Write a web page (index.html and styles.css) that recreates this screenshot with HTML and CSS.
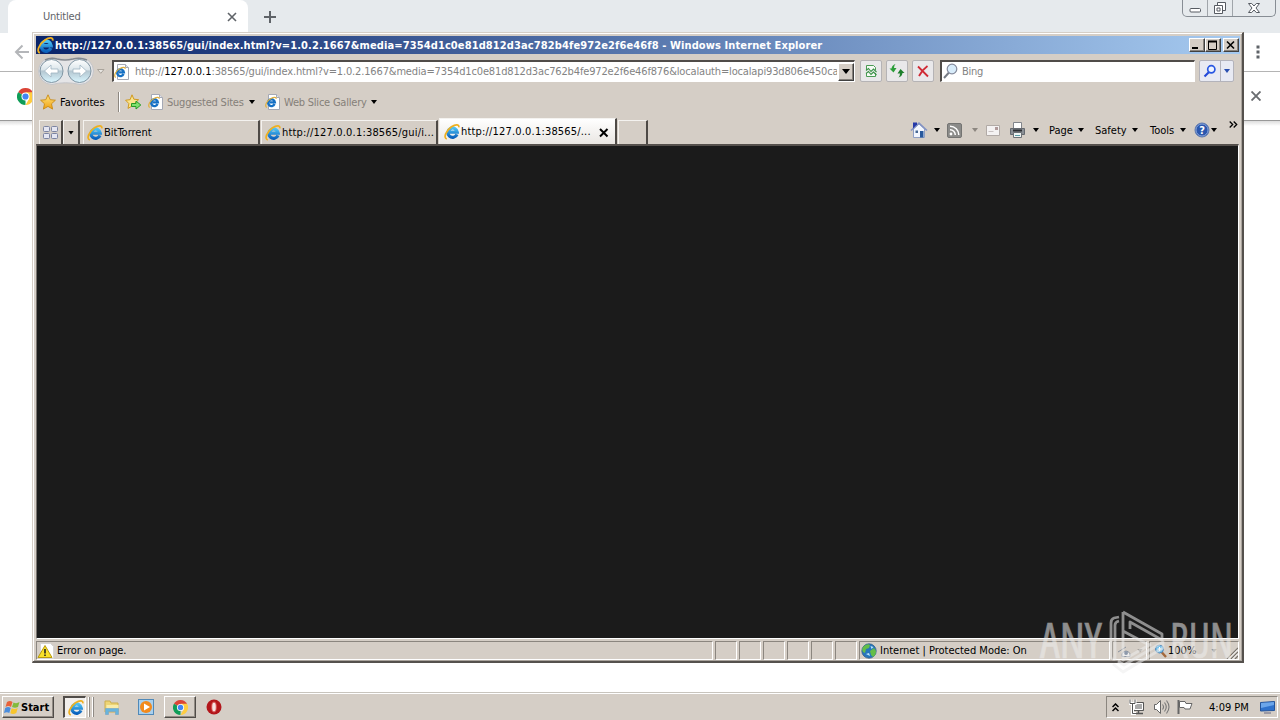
FILE: index.html
```html
<!DOCTYPE html>
<html lang="en">
<head>
    <meta charset="UTF-8">
    <title>Desktop</title>
    <link rel="stylesheet" href="styles.css">
</head>
<body>

    <!-- Shared icons -->
    <svg class="defs" width="0" height="0">
        <defs>
            <linearGradient id="blue" x1="0" y1="0" x2="0" y2="1">
                <stop offset="0" stop-color="#4cc2f4"/>
                <stop offset="1" stop-color="#0b62bd"/>
            </linearGradient>
            <linearGradient id="gold" x1="0" y1="0" x2="0" y2="1">
                <stop offset="0" stop-color="#ffe680"/>
                <stop offset="1" stop-color="#f0a010"/>
            </linearGradient>
            <linearGradient id="orb" x1="0" y1="0" x2="0" y2="1">
                <stop offset="0" stop-color="#ffffff"/>
                <stop offset="0.45" stop-color="#dbe5ea"/>
                <stop offset="0.5" stop-color="#b4c6d0"/>
                <stop offset="1" stop-color="#d9f6ff"/>
            </linearGradient>
        </defs>
        <symbol id="ie" viewBox="0 0 16 16">
            <path d="M13 10.400A4.700 4.700 0 1 1 13.300 8.200H5.200" fill="none" stroke="url(#blue)" stroke-width="3.200"/>
            <path d="M2.800 15C-1 14 2 6.500 7.500 2.800c4-2.600 7.800-2.700 7.300.6" fill="none" stroke="#efb020" stroke-width="1.700"/>
        </symbol>
        <symbol id="iepage" viewBox="0 0 16 16">
            <path d="M3.500.5h8l3 3v12h-11z" fill="#fff" stroke="#a5a9b5"/>
            <path d="M11.500.5v3h3" fill="#e4e4ea" stroke="#a5a9b5"/>
            <path d="M9.600 10.100A3.400 3.400 0 1 1 9.900 8.300H4.500" fill="none" stroke="#1670c4" stroke-width="2.300"/>
            <path d="M1.700 13.500C-.8 11.500 2 6.500 6 4.500c2.700-1.500 5.500-1.600 5.100.4" fill="none" stroke="#e0b040" stroke-width="1.200"/>
        </symbol>
        <symbol id="star" viewBox="0 0 16 16">
            <path d="M8 .8l2.200 4.900 5.200.5-3.900 3.600 1.100 5.300L8 12.400l-4.600 2.700 1.100-5.300L.6 6.200l5.200-.5z" fill="url(#gold)" stroke="#c98a14" stroke-width=".9"/>
        </symbol>
        <symbol id="chrome" viewBox="0 0 16 16">
            <path d="M8 8L1.070 4A8 8 0 0 1 14.930 4z" fill="#db4437"/>
            <path d="M8 8L8 16A8 8 0 0 1 1.070 4z" fill="#0f9d58"/>
            <path d="M8 4h6.930A8 8 0 0 1 8 16l3.400-6z" fill="#ffcd40"/>
            <circle cx="8" cy="8" r="3.800" fill="#fff"/>
            <circle cx="8" cy="8" r="2.900" fill="#4285f4"/>
        </symbol>
    </svg>

    <!-- Background browser -->
    <div class="browser">
        <div class="tabstrip">
            <div class="ctab">
                <span class="ctab-title">Untitled</span>
                <svg width="10" height="10" viewBox="0 0 10 10"><path d="M1 1l8 8M9 1l-8 8" stroke="#5f6368" stroke-width="1.600"/></svg>
            </div>
            <svg class="plus" width="12" height="12" viewBox="0 0 12 12"><path d="M6 0v12M0 6h12" stroke="#5f6368" stroke-width="2"/></svg>
            <div class="winbtns">
                <span class="wb"><svg width="14" height="16" viewBox="0 0 14 16"><rect x="2" y="8.500" width="10.500" height="3.500" rx="1" fill="#fff" stroke="#565b62"/></svg></span>
                <span class="wb"><svg width="14" height="16" viewBox="0 0 14 16"><path d="M4.500 2.500h8v8h-8z" fill="#fff" stroke="#565b62"/><path d="M1.500 5.500h8v8h-8z" fill="#fff" stroke="#565b62"/><path d="M4 8h3v3h-3z" fill="#fff" stroke="#565b62"/></svg></span>
                <span class="wb wide"><svg width="14" height="16" viewBox="0 0 14 16"><path d="M1.500 3.500h3.200L7 6l2.300-2.500h3.200L9 8l3.500 4.500H9.300L7 10l-2.300 2.500H1.500L5 8z" fill="#fff" stroke="#565b62"/></svg></span>
            </div>
        </div>
        <div class="ctoolbar">
            <svg width="16" height="16" viewBox="0 0 16 16"><path d="M15 8H2M8.500 1.500L2 8l6.500 6.500" fill="none" stroke="#b4b6b9" stroke-width="2"/></svg>
            <svg width="4" height="16" viewBox="0 0 4 16"><path d="M.5 1.500h3v3h-3zM.5 6.500h3v3h-3zM.5 11.500h3v3h-3z" fill="#5f6368"/></svg>
        </div>
        <div class="infobar">
            <svg width="17" height="17"><use href="#chrome"/></svg>
            <svg width="10" height="10" viewBox="0 0 10 10"><path d="M.5.5l9 9M9.500.5l-9 9" stroke="#6a6d71" stroke-width="1.900"/></svg>
        </div>
        <div class="cpage"></div>
    </div>

    <!-- Internet Explorer window -->
    <div class="window">
        <div class="titlebar">
            <svg width="17" height="17"><use href="#ie"/></svg>
            <span class="title">http://127.0.0.1:38565/gui/index.html?v=1.0.2.1667&amp;media=7354d1c0e81d812d3ac782b4fe972e2f6e46f8 - Windows Internet Explorer</span>
            <span class="tb"><svg width="12" height="10"><path d="M1 8h6" stroke="#000" stroke-width="2"/></svg></span>
            <span class="tb"><svg width="12" height="10"><path d="M1.500 1v8.500h8V1" fill="none" stroke="#000"/><path d="M1 1.500h9" stroke="#000" stroke-width="2"/></svg></span>
            <span class="tb last"><svg width="12" height="10"><path d="M2 1.500l7 7M9 1.500l-7 7" stroke="#000" stroke-width="1.600"/></svg></span>
        </div>

        <div class="navbar">
            <svg class="orbs" width="68" height="28" viewBox="0 0 68 28">
                <path d="M14 .5Q27 4 42 .5A13.500 13.500 0 0 1 42 27.500Q27 24 14 27.500A13.500 13.500 0 0 1 14 .5z" fill="#e5e5e7" stroke="#c4c5c9"/>
                <path d="M7 3Q13 0 19 2Q27 4 35 2Q42 0 49 3" fill="none" stroke="#85898f" stroke-width="1.500"/>
                <circle cx="13.500" cy="14" r="11.500" fill="url(#orb)" stroke="#8095a3"/>
                <circle cx="41.500" cy="14" r="11.500" fill="url(#orb)" stroke="#8095a3"/>
                <path d="M6.500 14l6.500-6v4h7v4h-7v4z" fill="#fff" stroke="#a0b4c2" stroke-width=".8"/>
                <path d="M48.500 14l-6.500-6v4h-7v4h7v4z" fill="#fff" stroke="#a0b4c2" stroke-width=".8"/>
                <path d="M59.500 12.500h6.500l-3.200 3.800z" fill="#e8e6e2" stroke="#aaa49c"/>
            </svg>
            <div class="address">
                <svg width="16" height="16"><use href="#iepage"/></svg>
                <span class="url">http://<b>127.0.0.1</b>:38565/gui/index.html?v=1.0.2.1667&amp;media=7354d1c0e81d812d3ac762b4fe972e2f6e46f876&amp;localauth=localapi93d806e450cac</span>
                <span class="drop"><i class="caret big"></i></span>
            </div>
            <span class="nb"><svg width="14" height="14" viewBox="0 0 14 14"><path d="M2.500 6V1.500h7l2 2V6M2.500 9v3.500h9V9" fill="#f4faf4" stroke="#4b9b55"/><path d="M2 6.500l2.500-2 2.500 3 2.500-2.500 3 3M2 9.500l2.500-2 2.500 3 2.500-2.500 3 3" fill="none" stroke="#3b9348" stroke-width="1.100"/></svg></span>
            <span class="nb"><svg width="16" height="14" viewBox="0 0 16 14"><path d="M6.500 0Q5 1.500 5 4h2.500L4.500 8.500.5 4.500h2Q3 1 6.500 0z" fill="#2c9e3a"/><path d="M9.500 13.500q1.500-1.500 1.500-4H8.500L11.500 5l4 4h-2q-.5 3.500-4 4.500z" fill="#1d7f2c"/></svg></span>
            <span class="nb"><svg width="14" height="14" viewBox="0 0 14 14"><path d="M2 2.500q4 4 10 10M11.500 2Q6 6 3 12" fill="none" stroke="#d02a35" stroke-width="1.800"/></svg></span>
            <div class="search">
                <svg width="17" height="17" viewBox="0 0 17 17"><path d="M7 9.500L2 15" stroke="#777c86" stroke-width="2"/><circle cx="10" cy="6" r="4.800" fill="#d8ecfa" stroke="#858a9c" stroke-width="1.200"/></svg>
                <span class="bing">Bing</span>
            </div>
            <div class="go">
                <span><svg width="14" height="14" viewBox="0 0 14 14"><path d="M6 8l-4.500 4.500" stroke="#2448d8" stroke-width="2.200"/><circle cx="8.300" cy="5.300" r="3.600" fill="#eef4ff" stroke="#2857e2" stroke-width="1.700"/></svg></span>
                <span class="go-drop"><i class="caret"></i></span>
            </div>
        </div>

        <div class="favbar">
            <svg width="16" height="16"><use href="#star"/></svg>
            <span class="fav-label">Favorites</span>
            <i class="sep"></i>
            <svg class="addfav" width="17" height="16" viewBox="0 0 17 16"><path d="M7 .8l1.900 4.400 4.700.5-3.500 3.200L7 12l-4 2.400.9-4.800L.6 6.200l4.500-.5z" fill="#fbe48c" stroke="#d09a20"/><path d="M6.500 9.500h4.500V7l4.800 4-4.800 4v-2.500H6.500z" fill="#7fe070" stroke="#279a27"/></svg>
            <svg class="sugicon" width="16" height="16"><use href="#iepage"/></svg>
            <span class="sug">Suggested Sites</span>
            <i class="caret"></i>
            <svg class="webicon" width="16" height="16"><use href="#iepage"/></svg>
            <span class="web">Web Slice Gallery</span>
            <i class="caret"></i>
        </div>

        <div class="tabrow">
            <div class="quick"><svg width="17" height="14" viewBox="0 0 17 14"><g fill="#e5e6f2" stroke="#7d84a2"><rect x="1.500" y=".5" width="6" height="5" rx="1"/><rect x="9.500" y=".5" width="6" height="5" rx="1"/><rect x="1.500" y="7.500" width="6" height="5" rx="1"/><rect x="9.500" y="7.500" width="6" height="5" rx="1"/></g></svg></div>
            <div class="quickdrop"><i class="caret"></i></div>
            <div class="tab"><svg width="16" height="16"><use href="#ie"/></svg><span>BitTorrent</span></div>
            <div class="tab"><svg width="16" height="16"><use href="#ie"/></svg><span class="wider">http://127.0.0.1:38565/gui/i...</span></div>
            <div class="tab active"><svg width="16" height="16"><use href="#ie"/></svg><span class="wider">http://127.0.0.1:38565/...</span>
                <svg class="close" width="10" height="10" viewBox="0 0 10 10"><path d="M1 1l7.500 7.500M8.500 1L1 8.500" stroke="#000" stroke-width="2"/></svg>
            </div>
            <div class="tab new"></div>
            <div class="commands">
                <svg class="home" width="18" height="18" viewBox="0 0 18 18"><path d="M3.500 8v8.500h11V8L9 3z" fill="#f2f6fe" stroke="#8f9fc4"/><path d="M1 9.500L9 2l8 7.500" fill="none" stroke="#8292c4" stroke-width="1.500"/><path d="M3 1.500h4v2l-4 4z" fill="#2438a8"/><path d="M10 10h3.500v6.500H10z" fill="#28589c"/><path d="M5.500 9.500h2.500v2.500H5.500z" fill="#476894"/></svg>
                <i class="caret"></i>
                <svg class="rss" width="15" height="15" viewBox="0 0 15 15"><rect x=".5" y=".5" width="14" height="14" rx="1.500" fill="#8b8b89" stroke="#747472"/><circle cx="4" cy="11" r="1.400" fill="#fff"/><path d="M3 6.700a5.300 5.300 0 0 1 5.300 5.300M3 3.200A8.800 8.800 0 0 1 11.800 12" fill="none" stroke="#fff" stroke-width="1.500"/></svg>
                <i class="caret dim"></i>
                <svg class="mail" width="14" height="11" viewBox="0 0 14 11"><path d="M.5.5h13v10H.5z" fill="#f4f2f2" stroke="#b1aaa6"/><path d="M9 2h3v3H9z" fill="#b09a9a"/><path d="M2.500 6.500h5" stroke="#c8c2c2"/></svg>
                <svg class="print" width="17" height="17" viewBox="0 0 17 17"><path d="M4.500.5h8v6h-8z" fill="#fff" stroke="#81858b"/><path d="M1.500 6.500h14v6h-14z" fill="#8b9096" stroke="#666a70"/><path d="M4 8.500h9" stroke="#2b2e32" stroke-width="2"/><path d="M4.500 10.500h8v5h-8z" fill="#eef4f4" stroke="#6d7176"/><path d="M6 13.500h5" stroke="#5d9da6"/></svg>
                <i class="caret"></i>
                <span class="cmd page">Page</span><i class="caret"></i>
                <span class="cmd safety">Safety</span><i class="caret"></i>
                <span class="cmd tools">Tools</span><i class="caret"></i>
                <svg class="help" width="16" height="16" viewBox="0 0 16 16"><circle cx="8" cy="8" r="7" fill="#2b57ae" stroke="#5f79ad"/><circle cx="8" cy="8" r="6" fill="none" stroke="#9bb5e4" stroke-width=".8"/><text x="8" y="12" class="q">?</text></svg>
                <i class="caret"></i>
                <svg class="more" width="9" height="7" viewBox="0 0 9 7"><path d="M.7.5l3 3-3 3M4.700.5l3 3-3 3" fill="none" stroke="#000" stroke-width="1.300"/></svg>
            </div>
        </div>

        <div class="content"></div>

        <div class="status">
            <div class="pane message">
                <svg width="17" height="16" viewBox="0 0 17 16"><path d="M3.500.5h10l3 3v12h-13z" fill="#fff" stroke="#d5d5d5"/><path d="M8 2.500L15 14.500H1z" fill="#f8e028" stroke="#b89a10"/><path d="M8 6v4.500M8 11.500v1.500" stroke="#222" stroke-width="1.600"/></svg>
                <span class="err">Error on page.</span>
            </div>
            <div class="pane small"></div>
            <div class="pane small"></div>
            <div class="pane small"></div>
            <div class="pane small"></div>
            <div class="pane small"></div>
            <div class="pane small"></div>
            <div class="pane zone">
                <svg width="16" height="16" viewBox="0 0 16 16"><circle cx="8" cy="8" r="7.200" fill="#2676bd" stroke="#335f88" stroke-width=".8"/><path d="M3 3q4-3 6-1l-1 3-3 1-1 4-2-1q-2-3 1-6M9 8l4-3 2 3q0 4-3 6l-2-2z" fill="#64be48"/><path d="M9.500 3l3 1-2 2zM5 11l3-1 1 3z" fill="#bfe8f8"/></svg>
                <span class="zonetext">Internet | Protected Mode: On</span>
            </div>
            <div class="pane filter">
                <svg width="15" height="14" viewBox="0 0 15 14"><path d="M1 8l8-5M5 9.500q4-5 8 0v3H5z" fill="#eee" stroke="#8a929e"/><circle cx="9" cy="9" r="2" fill="#8d99ab"/></svg>
                <i class="caret dim"></i>
            </div>
            <div class="pane zoom">
                <svg width="14" height="14" viewBox="0 0 14 14"><path d="M7.500 8l4.500 5" stroke="#a2683c" stroke-width="2.400"/><circle cx="5.500" cy="5" r="4" fill="#78c3ec" stroke="#4f83b4"/><path d="M3.500 5h4M5.500 3v4" stroke="#fff"/></svg>
                <span class="pct">100%</span>
                <i class="caret dim"></i>
                <svg class="grip" width="12" height="12" viewBox="0 0 12 12"><path d="M1 12L12 1M5 12l7-7M9 12l3-3" stroke="#77716a" stroke-width="1.200"/><path d="M2.500 12L12 2.500M6.500 12L12 6.500" stroke="#fff"/></svg>
            </div>
        </div>
    </div>

    <!-- Watermark -->
    <svg class="watermark" width="200" height="68" viewBox="0 0 200 68">
        <text x="2" y="51" textLength="62" lengthAdjust="spacingAndGlyphs">ANY</text>
        <text x="132" y="51" textLength="63" lengthAdjust="spacingAndGlyphs">RUN</text>
        <path d="M81 10l-5 1q-3 1-3 5v33q0 4 4 3V18q0-3 4-4M85 5l39 22v6L92 15v7M85 5v19l26 14M85 24v29l28-16M75 57l10 8 40-24v-6L86 58l-6-4" fill="none" stroke="#ededed" stroke-width="2.800" stroke-linejoin="round"/>
    </svg>

    <!-- Taskbar -->
    <div class="taskbar">
        <div class="start">
            <svg width="17" height="16" viewBox="0 0 17 16"><path d="M3 3q3-2 5.500 0L7 8Q4.500 6 1.500 8z" fill="#e8623a"/><path d="M9.500 3.500q3 1.500 6-.5L14 8q-3 1.500-6 0z" fill="#83ba3c"/><path d="M1.200 9q3-2 5.500 0l-1.400 5Q3 12.500 0 14z" fill="#4b8ddd"/><path d="M7.700 9.300q3 1.500 6-.3l-1.400 5q-3 1.800-6 .3z" fill="#f8c52c"/></svg>
            <span class="starttext">Start</span>
        </div>
        <div class="task pressed"><div class="pressed-face"><svg width="16" height="16"><use href="#ie"/></svg></div><i></i><i></i></div>
        <svg class="explorer" width="16" height="16" viewBox="0 0 16 16"><path d="M1 2h5l1 2h7v9H1z" fill="#edd576" stroke="#cdae4c"/><path d="M2.500 6h12v4h-12z" fill="#f9eca8"/><path d="M1.500 15.500V9.500h13v6h-3v-3h-7v3z" fill="#66b4de" stroke="#78a7c4" stroke-width=".7"/></svg>
        <svg class="player" width="16" height="16" viewBox="0 0 16 16"><rect x=".5" y=".5" width="15" height="15" fill="#a9d0ed" stroke="#5089b8"/><circle cx="8" cy="8" r="6" fill="#f28a1c"/><path d="M6 4.500v7L12 8z" fill="#fff"/></svg>
        <div class="task raised"><svg width="15" height="15"><use href="#chrome"/></svg></div>
        <svg class="opera" width="16" height="16" viewBox="0 0 16 16"><circle cx="8" cy="8" r="7.500" fill="#b3161b"/><ellipse cx="8" cy="8" rx="2.300" ry="5" fill="#f6e3e3" stroke="#d84c4c"/></svg>
        <div class="tray">
            <svg class="up" width="7" height="9" viewBox="0 0 7 9"><path d="M.5 4l3-3 3 3M.5 8l3-3 3 3" fill="none" stroke="#000" stroke-width="1.500"/></svg>
            <svg class="net" width="16" height="16" viewBox="0 0 16 16"><path d="M4.500 3.500h10v8h-10z" fill="#aaa" stroke="#555"/><path d="M5.500 4.500h8v6h-8z" fill="none" stroke="#fff"/><path d="M6 14.500h8M9.500 11.500v3" stroke="#555" stroke-width="1.500"/><path d="M1 .5v4h5v-4M3.500 4.500v10H7" fill="none" stroke="#fff" stroke-width="3"/><path d="M1 .5v4h5v-4M3.500 4.500v10H7" fill="none" stroke="#555"/></svg>
            <svg class="vol" width="17" height="16" viewBox="0 0 17 16"><path d="M1.500 5.500h2l4-4v13l-4-4h-2z" fill="#fff" stroke="#666"/><path d="M9.500 5.500q2 2.500 0 5M11.500 3.500q3.500 4.500 0 9M13.500 1.500q5 6.500 0 13" fill="none" stroke="#777" stroke-width="1.100"/></svg>
            <svg class="flag" width="16" height="16" viewBox="0 0 16 16"><path d="M1.500 1v14" stroke="#666" stroke-width="2"/><path d="M2.500 2.500H8l1 2h6l-2 5.500H8L7 8.500H2.500z" fill="#fff" stroke="#666"/></svg>
            <span class="clock">4:09 PM</span>
            <svg class="desk" width="16" height="14" viewBox="0 0 16 14"><path d="M.5 2.500l14-1v9l-14 .5z" fill="#2f72cc" stroke="#24549a"/><path d="M1 3l13-1v3L1 8z" fill="#6ca6ea"/><path d="M4 13h7" stroke="#889" stroke-width="1.500"/></svg>
        </div>
    </div>

</body>
</html>
```

FILE: styles.css
```css
* {
    box-sizing: border-box;
}
body {
    margin: 0;
    width: 1280px;
    height: 720px;
    overflow: hidden;
    display: flex;
    flex-direction: column;
    background: #fff;
    color: #000;
    font-family: "DejaVu Sans Condensed", "DejaVu Sans", sans-serif;
    font-stretch: condensed;
    font-size: 11px;
    white-space: nowrap;
}
svg {
    flex: none;
    display: block;
}
.defs {
    position: absolute;
}
.caret {
    flex: none;
    width: 6px;
    height: 4px;
    background: #000;
    clip-path: polygon(0 0, 100% 0, 50% 100%);
}
.caret.big {
    width: 8px;
    height: 5px;
}
.caret.dim {
    background: #8c8780;
}

/* Background browser */
.browser {
    flex: 1;
    display: flex;
    flex-direction: column;
}
.tabstrip {
    height: 33px;
    display: flex;
    align-items: flex-start;
    padding-left: 8px;
    background: #e6eaed;
}
.ctab {
    width: 240px;
    height: 33px;
    display: flex;
    align-items: center;
    justify-content: space-between;
    padding: 0 11px 0 35px;
    background: #fff;
    border-radius: 8px 8px 0 0;
    color: #5f6368;
}
.ctab-title {
    letter-spacing: -0.2px;
}
.plus {
    margin: 11px 0 0 16px;
}
.winbtns {
    display: flex;
    height: 17px;
    margin: 0 4px 0 auto;
    border: 1px solid #878d94;
    border-top: 0;
    border-radius: 0 0 5px 5px;
}
.wb {
    width: 25px;
    display: flex;
    justify-content: center;
    border-right: 1px solid #a0a5aa;
}
.wb.wide {
    width: 42px;
    border-right: 0;
}
.ctoolbar {
    height: 39px;
    display: flex;
    align-items: center;
    justify-content: space-between;
    padding: 0 20px 0 14px;
    border-bottom: 1px solid #b4b4b4;
}
.infobar {
    height: 49px;
    display: flex;
    align-items: center;
    justify-content: space-between;
    padding: 0 19px 0 17px;
    border-bottom: 1px solid #999;
}
.cpage {
    flex: 1;
    background: linear-gradient(#ddd, #fff 5px);
}

/* Internet Explorer window */
.window {
    position: absolute;
    left: 32px;
    top: 32px;
    width: 1212px;
    height: 631px;
    display: flex;
    flex-direction: column;
    padding: 2px 2px 1px 2px;
    background: #d5cec6;
    border: 1px solid #d5cec6;
    border-right: 2px solid #55514d;
    border-bottom: 2px solid #55514d;
    box-shadow: inset 1px 1px #fff, inset -1px -1px #aaa49d;
}
.titlebar {
    height: 18px;
    margin: 1px 0 0 1px;
    display: flex;
    align-items: center;
    padding: 0 1px;
    background: linear-gradient(90deg, #0a246a, #a6caf0);
    color: #fff;
    font-weight: bold;
}
.title {
    flex: 1;
    margin-left: 1px;
    letter-spacing: 0.11px;
}
.tb, .drop {
    display: flex;
    align-items: center;
    justify-content: center;
    background: #d5cec6;
    border: 1px solid;
    border-color: #fff #404040 #404040 #fff;
    box-shadow: inset -1px -1px #87827c;
}
.tb {
    width: 16px;
    height: 14px;
}
.tb.last {
    margin-left: 2px;
}
.navbar {
    height: 34px;
    display: flex;
    align-items: center;
    padding-left: 3px;
}
.orbs {
    margin-right: 6px;
}
.address, .search {
    height: 22px;
    display: flex;
    align-items: center;
    background: #fff;
    border: 1px solid #fff;
    border-top: 2px solid #504c49;
    border-left: 2px solid #504c49;
    color: #838383;
}
.address {
    width: 743px;
    margin-right: 5px;
}
.url {
    width: 702px;
    margin-left: 5px;
    overflow: hidden;
    letter-spacing: -0.15px;
}
.url b {
    font-weight: normal;
    color: #000;
    letter-spacing: 0;
}
.drop {
    width: 16px;
    height: 18px;
    margin-left: auto;
}
.nb {
    width: 22px;
    height: 22px;
    margin-right: 4px;
    display: flex;
    align-items: center;
    justify-content: center;
    background: #e9e8ea;
    border: 1px solid #b5b3b5;
    border-radius: 2px;
}
.search {
    width: 255px;
    margin-left: 2px;
}
.bing {
    margin-left: 3px;
    letter-spacing: -0.3px;
}
.go {
    height: 22px;
    margin-left: 4px;
    display: flex;
    background: #e8eaf3;
    border: 1px solid #b3b3bb;
    border-radius: 2px;
}
.go span {
    width: 20px;
    display: flex;
    align-items: center;
    justify-content: center;
}
.go .go-drop {
    width: 13px;
    border-left: 1px solid #b3b3bb;
}
.go .caret {
    background: #2a4fb0;
}
.favbar {
    height: 28px;
    display: flex;
    align-items: center;
    padding-left: 5px;
}
.fav-label {
    width: 58px;
    margin-left: 4px;
}
.sep {
    width: 2px;
    height: 20px;
    border-left: 1px solid #8d8780;
    border-right: 1px solid #fff;
}
.addfav {
    margin-left: 5px;
}
.sugicon {
    margin-left: 6px;
}
.sug, .web {
    color: #858079;
    letter-spacing: -0.22px;
}
.sug {
    width: 79px;
    margin: 0 3px;
}
.webicon {
    margin-left: 10px;
}
.web {
    width: 84px;
    margin: 0 3px;
}
.tabrow {
    height: 28px;
    display: flex;
    align-items: flex-end;
    padding-left: 4px;
}
.quick, .quickdrop, .tab {
    height: 24px;
    display: flex;
    align-items: center;
    border-top: 1px solid #f4f2ef;
    border-left: 1px solid #f4f2ef;
    border-right: 2px solid #4e4a46;
}
.quick {
    width: 24px;
    padding-left: 2px;
}
.quickdrop {
    width: 17px;
    padding-left: 4px;
    margin-right: 3px;
}
.tab {
    width: 177px;
    padding: 0 0 0 3px;
    margin-right: 1px;
}
.tab span {
    margin-left: 1px;
}
.tab .wider {
    letter-spacing: 0.18px;
}
.tab.active {
    width: 178px;
    height: 26px;
    padding-left: 4px;
    background: linear-gradient(#fff, #e9e6e2);
}
.tab .close {
    margin: 2px 6px 0 auto;
}
.tab.new {
    width: 30px;
}
.commands {
    height: 28px;
    flex: 1;
    display: flex;
    align-items: center;
    padding-left: 261px;
}
.rss {
    margin-left: 7px;
}
.home {
    margin-right: 6px;
}
.rss + .caret {
    margin-left: 10px;
}
.mail {
    margin: 0 9px 0 8px;
}
.print {
    margin-right: 7px;
}
.cmd {
    margin-left: 10px;
}
.page {
    width: 29px;
}
.safety {
    width: 37px;
}
.tools {
    width: 30px;
}
.cmd.safety {
    margin-left: 11px;
}
.cmd.tools {
    margin-left: 12px;
}
.help {
    margin-left: 8px;
    margin-right: 1px;
}
.q {
    fill: #fff;
    font-size: 11px;
    font-weight: bold;
    text-anchor: middle;
}
.more {
    margin: -12px 0 0 12px;
}
.content {
    height: 495px;
    margin: 0 1px 0 1px;
    background: #1b1b1b;
    border-top: 2px solid #55504c;
    border-left: 1px solid #77726d;
    border-right: 1px solid #fff;
    border-bottom: 1px solid #fff;
}
.status {
    height: 19px;
    margin: 2px 1px 0 1px;
    display: flex;
}
.pane {
    height: 19px;
    margin-right: 2px;
    display: flex;
    align-items: center;
    border: 1px solid;
    border-color: #8b867f #fff #fff #8b867f;
}
.message {
    width: 677px;
}
.err {
    margin-left: 3px;
    letter-spacing: -0.08px;
}
.small {
    width: 22px;
}
.zone {
    width: 251px;
    padding-left: 1px;
}
.zonetext {
    margin-left: 3px;
}
.filter {
    width: 35px;
    padding-left: 4px;
}
.filter .caret {
    margin-left: 5px;
}
.zoom {
    flex: 1;
    margin-right: 0;
    padding-left: 4px;
}
.pct {
    width: 43px;
    margin-left: 0;
}
.grip {
    margin: 5px 0 0 auto;
}

/* Watermark lies over the page and status bar */
.watermark {
    position: absolute;
    left: 1038px;
    top: 607px;
    opacity: 0.55;
}
.watermark text {
    fill: #ededed;
    stroke: #ededed;
    stroke-width: 0.6px;
    font-family: "Open Sans", sans-serif;
    font-size: 50px;
}

/* Taskbar */
.taskbar {
    height: 28px;
    display: flex;
    align-items: center;
    background: #d5cec6;
    border-top: 1px solid #c8c4bd;
    box-shadow: inset 0 1px #fff;
}
.start, .task {
    height: 22px;
    margin-top: 1px;
    display: flex;
    align-items: center;
    border: 1px solid;
    border-color: #fff #504c48 #504c48 #fff;
    box-shadow: inset -1px -1px #928c85;
}
.start {
    width: 52px;
    margin-left: 2px;
    padding-left: 1px;
    font-weight: bold;
}
.pressed {
    width: 31px;
    margin-left: 9px;
    border: 0;
    box-shadow: none;
}
.pressed-face {
    width: 24px;
    height: 22px;
    padding: 2px 0 0 3px;
    background: #f1eeeb;
    border: 1px solid #fff;
    border-top: 2px solid #504c48;
    border-left: 2px solid #504c48;
}
.pressed i {
    width: 2px;
    height: 20px;
    margin-left: 2px;
    background: #fff;
    border-right: 1px solid #8f8a84;
}
.explorer {
    margin-left: 10px;
}
.player {
    margin-left: 18px;
}
.raised {
    width: 32px;
    margin-left: 10px;
    justify-content: center;
}
.opera {
    margin-left: 10px;
}
.tray {
    width: 172px;
    height: 22px;
    margin: 1px 2px 0 auto;
    display: flex;
    align-items: center;
    padding-left: 5px;
    border: 1px solid;
    border-color: #8b867f #fff #fff #8b867f;
}
.net {
    margin-left: 10px;
}
.vol {
    margin-left: 8px;
}
.flag {
    margin-left: 7px;
}
.clock {
    width: 51px;
    margin-left: 16px;
}
```
